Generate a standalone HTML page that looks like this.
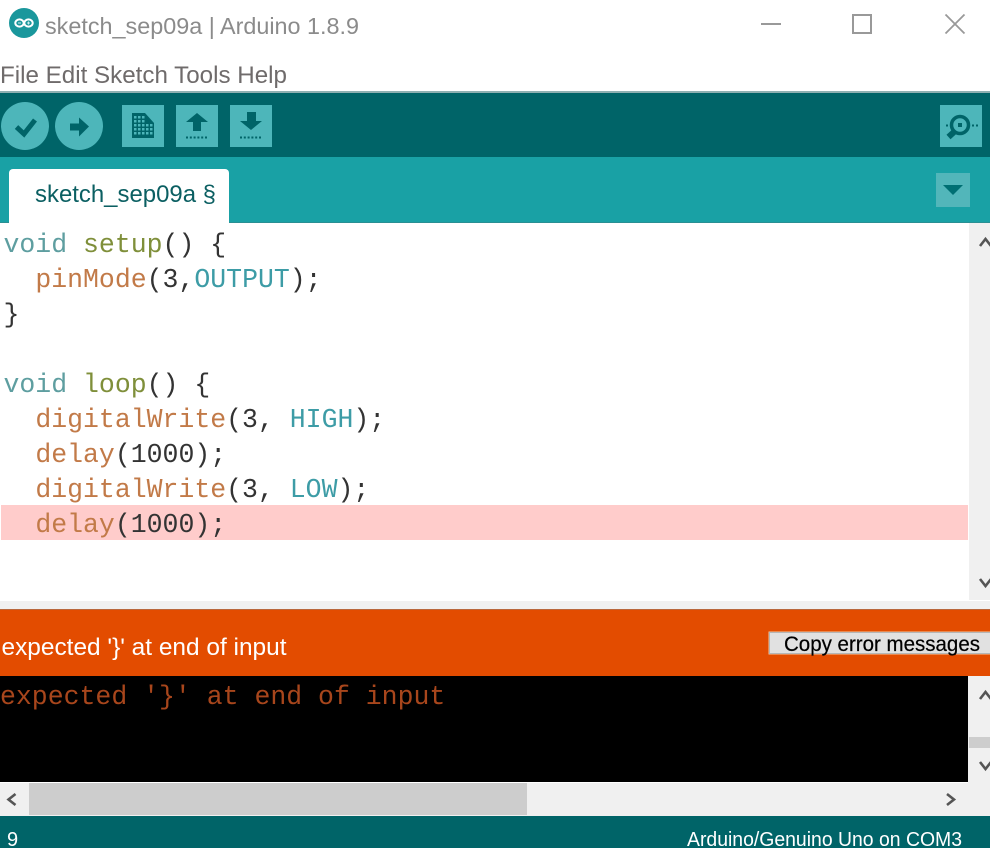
<!DOCTYPE html>
<html>
<head>
<meta charset="utf-8">
<title>sketch_sep09a | Arduino 1.8.9</title>
<style>
html,body{margin:0;padding:0;background:#fff;width:990px;height:848px;overflow:hidden}
svg{display:block}
.s{font-family:"Liberation Sans",sans-serif}
.m{font-family:"Liberation Mono",monospace;font-size:26.5px}
.t{fill:#5e9ea0}.f{fill:#7f8f3a}.o{fill:#c27a48}.c{fill:#3d9ca6}.k{fill:#333}
</style>
</head>
<body>
<svg width="990" height="848" viewBox="0 0 990 848" xmlns="http://www.w3.org/2000/svg">
<rect width="990" height="848" fill="#fff"/>

<!-- title bar -->
<circle cx="24" cy="23" r="15" fill="#1a979c"/>
<ellipse cx="19.500" cy="23" rx="4.200" ry="3.600" fill="none" stroke="#fff" stroke-width="2"/>
<ellipse cx="28.500" cy="23" rx="4.200" ry="3.600" fill="none" stroke="#fff" stroke-width="2"/>
<path d="M18 23h3M27 23h3M28.500 21.500v3" stroke="#cfeeee" stroke-width="1" fill="none"/>
<text class="s" x="45" y="34" font-size="23" fill="#8b8b8b" textLength="314" lengthAdjust="spacingAndGlyphs">sketch_sep09a | Arduino 1.8.9</text>
<rect x="761" y="23" width="20" height="2" fill="#999"/>
<rect x="853" y="15" width="18" height="18" fill="none" stroke="#999" stroke-width="2"/>
<path d="M945.500 14.500L964.500 33.500M964.500 14.500L945.500 33.500" stroke="#999" stroke-width="1.800" fill="none"/>

<!-- menu -->
<text class="s" x="0" y="83" font-size="24" fill="#6f6b6b" textLength="287" lengthAdjust="spacingAndGlyphs">File Edit Sketch Tools Help</text>
<rect x="0" y="91" width="990" height="2" fill="#8fb0b2"/>

<!-- toolbar -->
<rect x="0" y="93" width="990" height="64" fill="#006468"/>
<circle cx="25" cy="126" r="24" fill="#4db6ba"/>
<circle cx="79" cy="126" r="24" fill="#4db6ba"/>
<path d="M16.500 127L24 134L35 120" fill="none" stroke="#006468" stroke-width="5"/>
<path d="M70 123.500h9v-6l10 9l-10 10v-6h-9z" fill="#006468"/>
<rect x="122" y="105" width="42" height="42" fill="#4db6ba"/>
<rect x="176" y="105" width="42" height="42" fill="#4db6ba"/>
<rect x="230" y="105" width="42" height="42" fill="#4db6ba"/>
<rect x="940" y="105" width="42" height="42" fill="#4db6ba"/>

<!-- new -->
<path d="M132 113h13l9 10v15h-22z" fill="#006468"/>
<path d="M134 116h2.500v2.500h-2.500zM138 116h2.500v2.500h-2.500zM142 116h2.500v2.500h-2.500zM134 120h2.500v2.500h-2.500zM138 120h2.500v2.500h-2.500zM142 120h2.500v2.500h-2.500zM134 124h2.500v2.500h-2.500zM138 124h2.500v2.500h-2.500zM142 124h2.500v2.500h-2.500zM146 124h2.500v2.500h-2.500zM150 124h2.500v2.500h-2.500zM134 128h2.500v2.500h-2.500zM138 128h2.500v2.500h-2.500zM142 128h2.500v2.500h-2.500zM146 128h2.500v2.500h-2.500zM150 128h2.500v2.500h-2.500zM134 132h2.500v2.500h-2.500zM138 132h2.500v2.500h-2.500zM142 132h2.500v2.500h-2.500zM146 132h2.500v2.500h-2.500zM150 132h2.500v2.500h-2.500z" fill="#4db6ba"/>
<!-- open -->
<path d="M197 113l11 9h-7v9h-8v-9h-7z" fill="#006468"/>
<path d="M186 137.500h22" stroke="#006468" stroke-width="2" stroke-dasharray="2 1.800" fill="none"/>
<!-- save -->
<path d="M247 112h9v9h6l-11 9l-11-9h7z" fill="#006468"/>
<path d="M240 137.500h22" stroke="#006468" stroke-width="2" stroke-dasharray="2 1.800" fill="none"/>
<!-- serial -->
<circle cx="960" cy="125" r="8.500" fill="none" stroke="#006468" stroke-width="3.500"/>
<rect x="958" y="123" width="4" height="4" fill="#006468"/>
<path d="M954 132l-5.500 5" stroke="#006468" stroke-width="6" fill="none"/>
<rect x="946" y="124.500" width="2" height="2" fill="#006468"/>
<rect x="972" y="124.500" width="2" height="2" fill="#006468"/>
<rect x="976" y="124.500" width="2" height="2" fill="#006468"/>

<!-- tabs -->
<rect x="0" y="157" width="990" height="66" fill="#19a1a5"/>
<rect x="229" y="222" width="761" height="1" fill="#2a8f93"/>
<rect x="0" y="222" width="9" height="1" fill="#2a8f93"/>
<path d="M9 223v-50a4 4 0 0 1 4-4h212a4 4 0 0 1 4 4v50z" fill="#fff"/>
<text class="s" x="35" y="202" font-size="24" fill="#0b5f62" textLength="181" lengthAdjust="spacingAndGlyphs">sketch_sep09a §</text>
<rect x="936" y="173" width="34" height="34" fill="#52b6ba"/>
<path d="M943 185h20l-10 10z" fill="#006f73"/>

<!-- editor -->
<rect x="0" y="223" width="990" height="378" fill="#fff"/>
<rect x="969" y="223" width="21" height="377" fill="#f0f0f0"/>
<rect x="1" y="505" width="967" height="35" fill="#ffcccb"/>
<path d="M980 246L985.500 239L991 246" fill="none" stroke="#555" stroke-width="2.600"/>
<path d="M980 579L985.500 586L991 579" fill="none" stroke="#555" stroke-width="2.600"/>

<g class="m" xml:space="preserve">
<text x="3.500" y="252" xml:space="preserve"><tspan class="t">void</tspan> <tspan class="f">setup</tspan><tspan class="k">() {</tspan></text>
<text x="3.500" y="287" xml:space="preserve"><tspan class="k">  </tspan><tspan class="o">pinMode</tspan><tspan class="k">(3,</tspan><tspan class="c">OUTPUT</tspan><tspan class="k">);</tspan></text>
<text x="3.500" y="322" xml:space="preserve"><tspan class="k">}</tspan></text>
<text x="3.500" y="392" xml:space="preserve"><tspan class="t">void</tspan> <tspan class="f">loop</tspan><tspan class="k">() {</tspan></text>
<text x="3.500" y="427" xml:space="preserve"><tspan class="k">  </tspan><tspan class="o">digitalWrite</tspan><tspan class="k">(3, </tspan><tspan class="c">HIGH</tspan><tspan class="k">);</tspan></text>
<text x="3.500" y="462" xml:space="preserve"><tspan class="k">  </tspan><tspan class="o">delay</tspan><tspan class="k">(1000);</tspan></text>
<text x="3.500" y="497" xml:space="preserve"><tspan class="k">  </tspan><tspan class="o">digitalWrite</tspan><tspan class="k">(3, </tspan><tspan class="c">LOW</tspan><tspan class="k">);</tspan></text>
<text x="3.500" y="532" xml:space="preserve"><tspan class="k">  </tspan><tspan class="o">delay</tspan><tspan class="k">(1000);</tspan></text>
</g>

<!-- divider -->
<rect x="0" y="601" width="990" height="8" fill="#f0f0f0"/>

<!-- error bar -->
<rect x="0" y="609" width="990" height="67" fill="#e34c00"/>
<rect x="0" y="609" width="990" height="1" fill="#b9673c"/>
<text class="s" x="1.500" y="655" font-size="24" fill="#fff" textLength="285" lengthAdjust="spacingAndGlyphs">expected '}' at end of input</text>
<rect x="768.500" y="631.500" width="222" height="23" fill="#f1c79f"/>
<rect x="769.500" y="632.500" width="221" height="21" fill="#e1e1e1" stroke="#b5b5b5" stroke-width="1"/>
<text class="s" x="784" y="651" font-size="21" fill="#000" stroke="#000" stroke-width="0.200" textLength="196" lengthAdjust="spacingAndGlyphs">Copy error messages</text>

<!-- console -->
<rect x="0" y="676" width="968" height="106" fill="#000"/>
<rect x="968" y="676" width="22" height="107" fill="#f0f0f0"/>
<rect x="969" y="737" width="21" height="11" fill="#cdcdcd"/>
<path d="M980 699L985.500 692L991 699" fill="none" stroke="#555" stroke-width="2.600"/>
<path d="M980 762L985.500 769L991 762" fill="none" stroke="#555" stroke-width="2.600"/>
<text class="m" x="0" y="704" fill="#a8461c" xml:space="preserve">expected '}' at end of input</text>

<!-- horizontal scrollbar -->
<rect x="0" y="783" width="990" height="33" fill="#f0f0f0"/>
<rect x="29" y="783" width="498" height="32" fill="#cdcdcd"/>
<path d="M15.500 794L8.500 799.500L15.500 805" fill="none" stroke="#555" stroke-width="2.600"/>
<path d="M947 794L954 799.500L947 805" fill="none" stroke="#555" stroke-width="2.600"/>

<!-- status -->
<rect x="0" y="816" width="990" height="32" fill="#006468"/>
<text class="s" x="7" y="846" font-size="20" fill="#fff">9</text>
<text class="s" x="687" y="846" font-size="20" fill="#fff" textLength="275" lengthAdjust="spacingAndGlyphs">Arduino/Genuino Uno on COM3</text>
</svg>
</body>
</html>
